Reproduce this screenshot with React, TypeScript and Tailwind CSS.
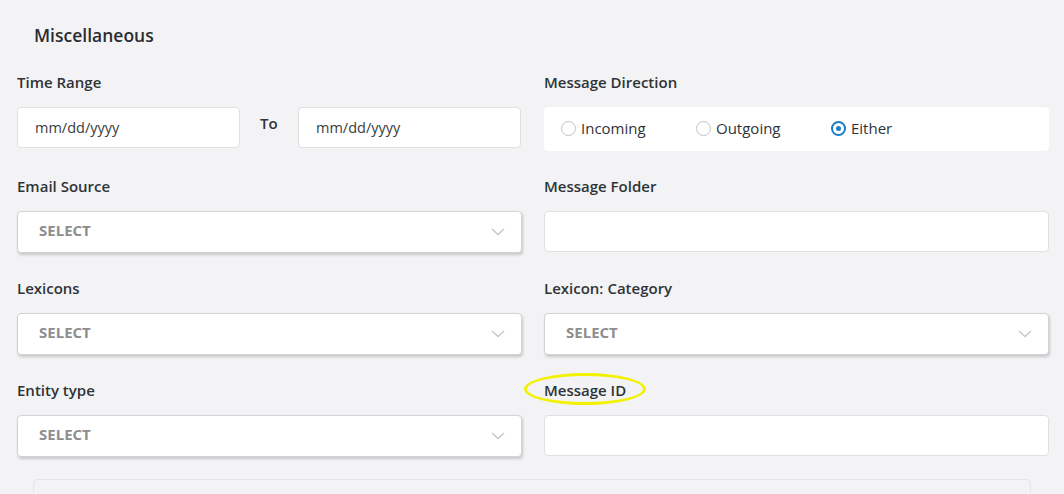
import React from 'react';

const font = { fontFamily: '"Open Sans", "Noto Sans", Arial, sans-serif' };

function Label({ children }: { children: React.ReactNode }) {
  return <div className="h-5 leading-5 text-[15px] font-semibold text-[#2f3337] mb-[15px]">{children}</div>;
}

function Chevron() {
  return (
    <svg width="14" height="8" viewBox="0 0 14 8" fill="none">
      <path d="M1 1l6 5.5L13 1" stroke="#c3c9d1" strokeWidth="1.4" />
    </svg>
  );
}

function Select() {
  return (
    <div className="h-[42px] w-full bg-white border border-[#d3d3d3] rounded-[4px] shadow-[1px_2px_3px_rgba(0,0,0,0.18)] flex items-center justify-between pl-[21px] pr-[16px]">
      <span className="text-[15px] font-bold text-[#8e8e8e] -mt-[3px]">SELECT</span>
      <Chevron />
    </div>
  );
}

function TextBox({ placeholder, className = '' }: { placeholder?: string; className?: string }) {
  return (
    <div className={`h-[41px] bg-white border border-[#e0e0e0] rounded-[4px] flex items-center pl-[17px] text-[14.5px] text-[#3a3d40] ${className}`}>
      {placeholder}
    </div>
  );
}

function Radio({ label, checked }: { label: string; checked?: boolean }) {
  return (
    <div className="w-[135px] flex items-center gap-[5px] text-[15px] text-[#2f3337]">
      {checked ? (
        <span className="w-[15px] h-[15px] rounded-full border-2 border-[#1a7dc4] flex items-center justify-center">
          <span className="w-[5px] h-[5px] rounded-full bg-[#1a7dc4]" />
        </span>
      ) : (
        <span className="w-[15px] h-[15px] rounded-full border border-[#c4c4c4] bg-white" />
      )}
      <span>{label}</span>
    </div>
  );
}

export default function App() {
  return (
    <div className="w-[1064px] h-[494px] overflow-hidden bg-[#f3f3f5] pl-[17px]" style={font}>
      <div className="pt-[23px] pl-[17px] h-[47px] leading-6 text-[17.5px] font-semibold text-[#2a2d31]">Miscellaneous</div>
      <div className="mt-[25px] grid grid-cols-[505px_505px] gap-x-[22px] gap-y-[25px] items-start">
        <div>
          <Label>Time Range</Label>
          <div className="flex items-center">
            <TextBox placeholder="mm/dd/yyyy" className="w-[223px]" />
            <div className="w-[58px] -mt-[8px] pl-[20px] text-[15px] font-semibold text-[#2f3337]">To</div>
            <TextBox placeholder="mm/dd/yyyy" className="w-[223px]" />
          </div>
        </div>
        <div>
          <Label>Message Direction</Label>
          <div className="h-[44px] bg-white rounded-[4px] flex items-center pl-[17px] pb-[2px]">
            <Radio label="Incoming" />
            <Radio label="Outgoing" />
            <Radio label="Either" checked />
          </div>
        </div>

        <div>
          <Label>Email Source</Label>
          <Select />
        </div>
        <div>
          <Label>Message Folder</Label>
          <TextBox />
        </div>

        <div>
          <Label>Lexicons</Label>
          <Select />
        </div>
        <div>
          <Label>Lexicon: Category</Label>
          <Select />
        </div>

        <div>
          <Label>Entity type</Label>
          <Select />
        </div>
        <div>
          <Label>
            <span className="relative inline-block">
              Message ID
              <span className="absolute left-[-20px] top-[-7px] w-[122px] h-[32px] rounded-[50%] border-[3px] border-[#f2f200]" />
            </span>
          </Label>
          <TextBox />
        </div>
      </div>
      <div className="mt-[22px] ml-[16px] w-[998px] h-[40px] border border-[#e6e6e8] rounded-[4px]" />
    </div>
  );
}
